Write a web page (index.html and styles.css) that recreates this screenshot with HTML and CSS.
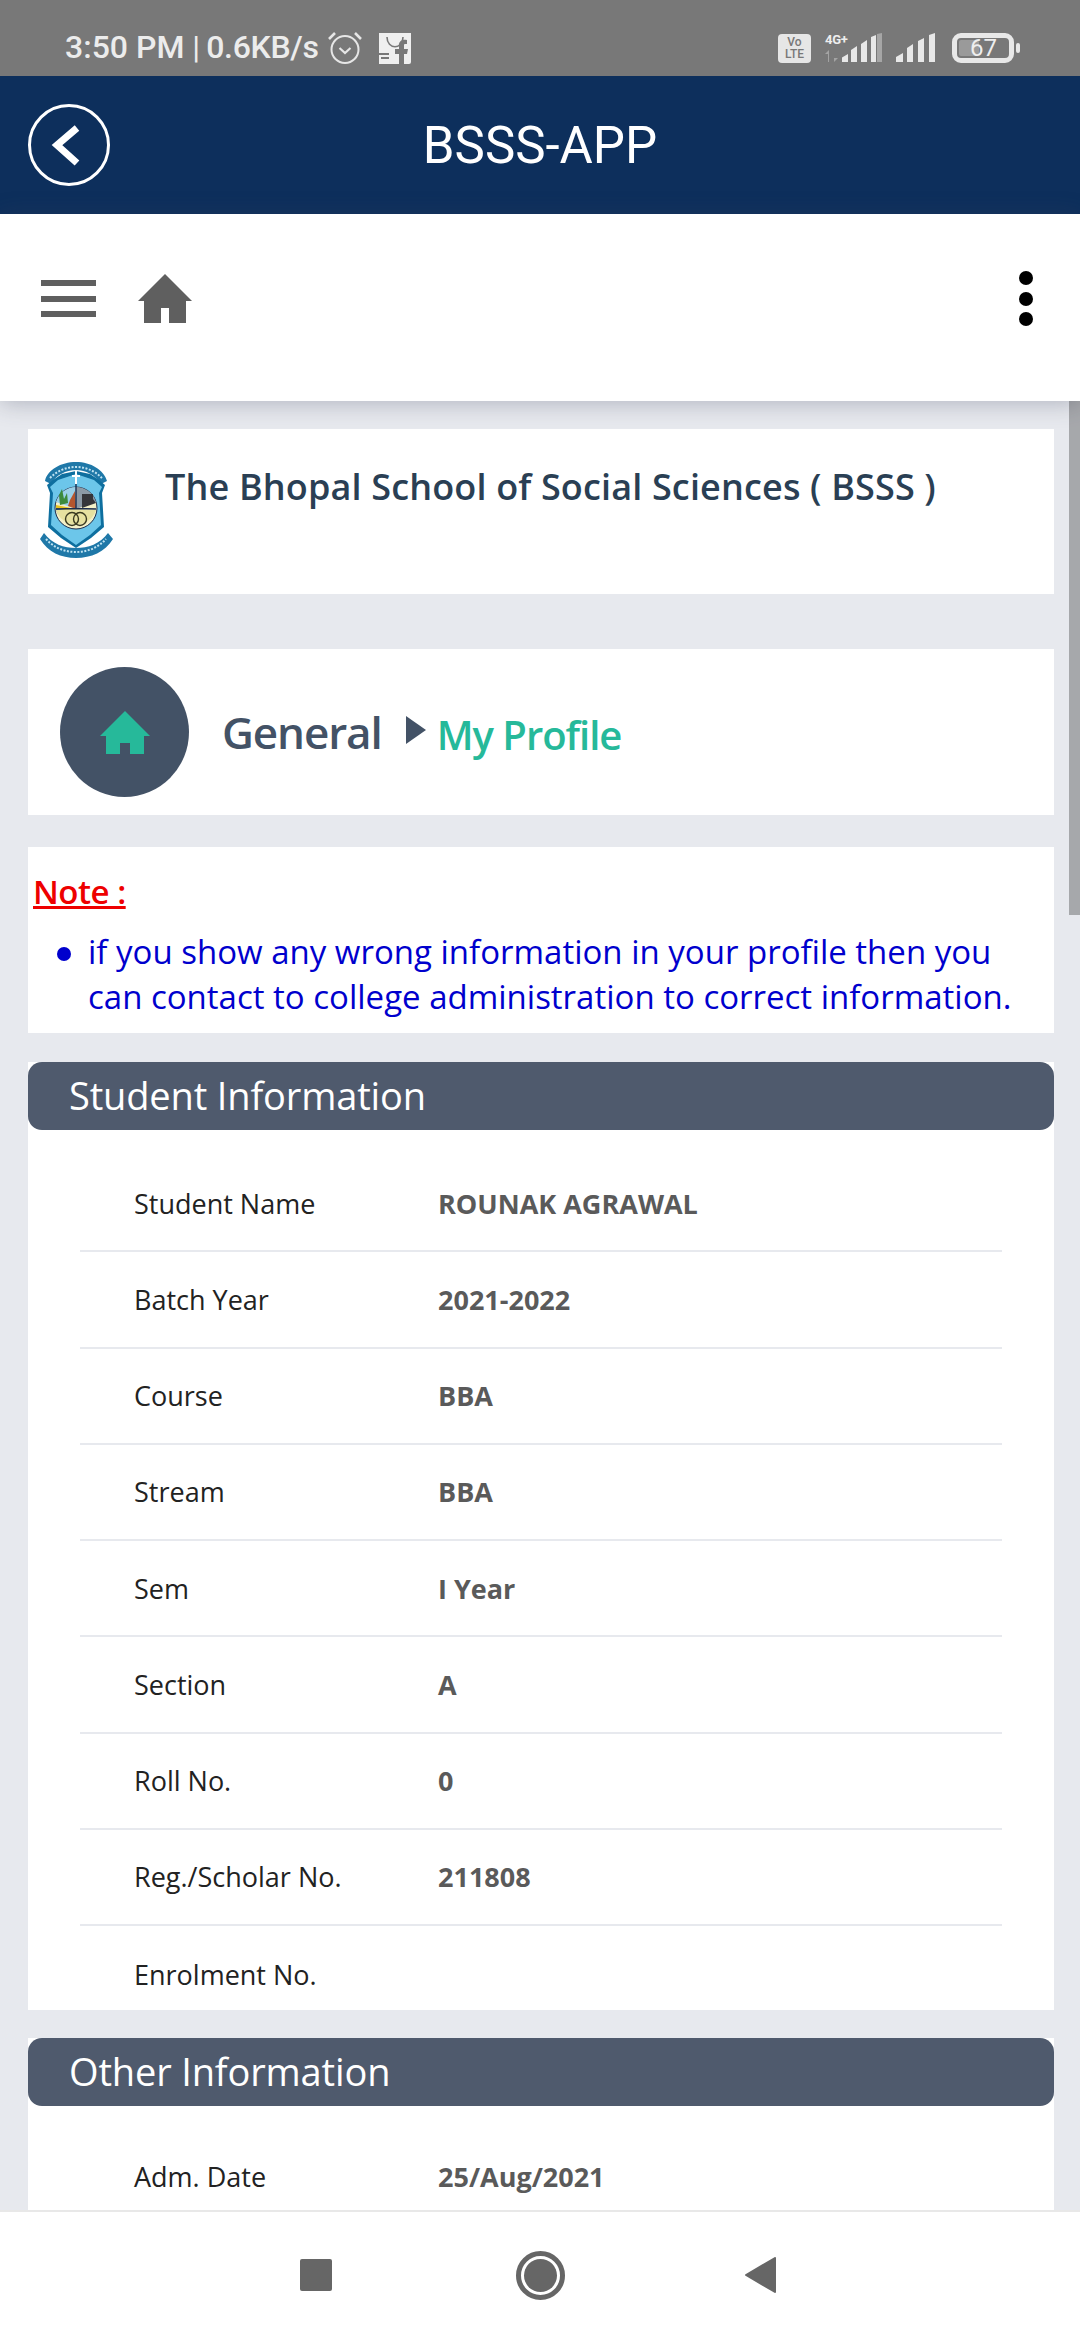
FILE: index.html
```html
<!DOCTYPE html>
<html lang="en">
<head>
<meta charset="utf-8">
<title>BSSS-APP</title>
<link rel="stylesheet" href="styles.css">
</head>
<body>
<div class="phone">
  <header class="status">
    <div class="status-left">
      <span class="clock">3:50 PM</span><span class="sep">|</span><span class="speed">0.6KB/s</span>
      <svg class="ic-alarm" viewBox="0 0 36 34" fill="none" stroke="#e6e6e6"><circle cx="18" cy="18.500" r="13.500" stroke-width="2"/><path d="M12.500 17l5.500 5 5.500-5" stroke-width="2.200"/><path d="M2 8l6-6M34 8l-6-6" stroke-width="2.600"/></svg>
      <svg class="ic-bag" viewBox="0 0 34 34"><path fill="#efefef" d="M1 3a2 2 0 0 1 2-2h28a2 2 0 0 1 2 2v29a2 2 0 0 1-2 2H1z"/><path d="M9 7c0 13 16 13 16 0" fill="none" stroke="#787878" stroke-width="1.600"/><path fill="#787878" d="M1 1h32v2H1zM21 34V24h-4v-5h4v-4c0-4 3-6 8-5v4c-3 0-3 0-3 2v3h4l-1 5h-3v10zM1 23h10v2H1zM3 27h8v2H3z"/></svg>
    </div>
    <div class="status-right">
      <div class="volte"><span>Vo</span><span>LTE</span></div>
      <div class="net">
        <span class="net-label">4G+</span>
        <svg class="ic-arrows" viewBox="0 0 13 12"><path fill="#a3a3a3" d="M3 12V4H0l4-4v12zM9 0v8h4l-4 4z"/></svg>
      </div>
      <svg class="ic-sig1" viewBox="0 0 40 29"><path fill="#e8e8e8" d="M0 29v-4l7-4v8zM10 29V17l6-4v16zM20 29V11l6-4v22zM30 29V4l5-2v27z" transform="translate(-1 0)"/><path fill="#a6a6a6" d="M35 29V1l5-1v29z"/></svg>
      <svg class="ic-sig2" viewBox="0 0 40 29"><path fill="#e8e8e8" d="M0 29v-5l7-4v9zM11 29V15l6-4v18zM22 29V8l6-3v24zM33 29V2l6-2v29z"/></svg>
      <div class="battery"><span class="battery-fill"></span><span class="battery-num">67</span></div>
      <span class="battery-nub"></span>
    </div>
  </header>

  <div class="appbar">
    <svg class="ic-back" viewBox="0 0 84 84" fill="none" stroke="#fff"><circle cx="42" cy="42" r="39.500" stroke-width="3"/><path d="M50 25L30 42l20 18" stroke-width="7"/></svg>
    <h1 class="app-title">BSSS-APP</h1>
  </div>

  <nav class="toolbar">
    <div class="burger"><span></span><span></span><span></span></div>
    <svg class="ic-home" viewBox="0 0 54 49"><path fill="#5f5f5f" d="M27 0l27 27h-6v22H31V34h-8v15H6V27H0z"/></svg>
    <div class="dots"><span></span><span></span><span></span></div>
  </nav>

  <main class="content">
    <section class="brand card">
      <svg class="logo" viewBox="0 0 74 97">
        <path fill="#1f78a8" d="M6 20C8 9 22 1 37 1s28 8 31 19l-6 3C56 14 47 9 37 9S17 14 12 23z"/>
        <path fill="#0e6f9f" d="M8 24l6-5 9-6 14-3 14 3 9 6 6 5-3 8 2 34-13 11-15 10-15-10-13-11 2-34z"/>
        <path fill="#6cc6ea" d="M11 26l8-7 18-6 18 6 8 7-3 6 2 32-11 10-14 10-14-10-11-10 2-32z"/>
        <circle cx="37" cy="47" r="21" fill="#f4f0c8" stroke="#1c2d4d" stroke-width="1"/>
        <path fill="#9ad0e8" d="M37 26a21 21 0 0 0-20 15l20 7z"/>
        <path fill="#8c9aa6" d="M37 26a21 21 0 0 1 20 15l-20 7z"/>
        <path fill="#3c8a3c" d="M20 34l3-6 2 10 3-6 1 10-8 2z"/>
        <path fill="#e6c21f" d="M17 44l20 4-5 4-15-3z"/>
        <path fill="#2d7fc4" d="M17 47l13 3-4 6-8-4z"/>
        <path fill="#b5562e" d="M31 39l5-9 1 18-8-3z"/>
        <path fill="#35363a" d="M43 33h11v5l3 4-14 5z"/>
        <path fill="#e6e1a0" d="M17 49l20-1 20 1a21 21 0 0 1-40 0z"/>
        <path d="M37 13v35M17 48l20-0.500 20 0.500" stroke="#1c2d4d" stroke-width="1.400" fill="none"/>
        <circle cx="33" cy="58" r="6.500" fill="none" stroke="#3a3a20" stroke-width="1.400"/>
        <circle cx="41" cy="58" r="6.500" fill="none" stroke="#3a3a20" stroke-width="1.400"/>
        <path d="M37 10v13M33 15h8" stroke="#fff" stroke-width="2"/>
        <path fill="#1f78a8" d="M1 78l4-6c8 11 20 15 32 15s24-4 32-15l5 6c-8 13-22 19-37 19S9 91 1 78z"/>
        <path d="M7 78c8 9 19 13 30 13s22-4 30-13" fill="none" stroke="#bfe3f2" stroke-width="2" stroke-dasharray="2 1.500"/>
        <path d="M11 17c7-7 16-11 26-11s19 4 26 11" fill="none" stroke="#bfe3f2" stroke-width="2" stroke-dasharray="2 1.500"/>
      </svg>
      <h2 class="brand-name">The Bhopal School of Social Sciences ( BSSS )</h2>
    </section>

    <section class="crumbs card">
      <span class="crumb-disc">
        <svg class="ic-crumb" viewBox="0 0 50 43"><path fill="#26b99a" d="M25 0l25 25h-6v18H30V32h-10v11H6V25H0z"/></svg>
      </span>
      <span class="crumb-parent">General</span>
      <span class="crumb-arrow"></span>
      <span class="crumb-current">My Profile</span>
    </section>

    <section class="note card">
      <p class="note-title">Note :</p>
      <ul class="note-list">
        <li>if you show any wrong information in your profile then you can contact to college administration to correct information.</li>
      </ul>
    </section>

    <section class="panel student">
      <h3 class="panel-head">Student Information</h3>
      <dl class="rows">
        <div class="row"><dt>Student Name</dt><dd>ROUNAK AGRAWAL</dd></div>
        <div class="row"><dt>Batch Year</dt><dd>2021-2022</dd></div>
        <div class="row"><dt>Course</dt><dd>BBA</dd></div>
        <div class="row"><dt>Stream</dt><dd>BBA</dd></div>
        <div class="row"><dt>Sem</dt><dd>I Year</dd></div>
        <div class="row"><dt>Section</dt><dd>A</dd></div>
        <div class="row"><dt>Roll No.</dt><dd>0</dd></div>
        <div class="row"><dt>Reg./Scholar No.</dt><dd>211808</dd></div>
        <div class="row row-last"><dt>Enrolment No.</dt><dd></dd></div>
      </dl>
    </section>

    <section class="panel other">
      <h3 class="panel-head">Other Information</h3>
      <dl class="rows">
        <div class="row"><dt>Adm. Date</dt><dd>25/Aug/2021</dd></div>
      </dl>
    </section>
    <div class="scrollbar"></div>
  </main>

  <footer class="navbar">
    <span class="nav-square"></span>
    <span class="nav-circle"><span></span></span>
    <svg class="nav-back" viewBox="0 0 31 36"><path fill="#666" stroke="#666" stroke-width="2" stroke-linejoin="round" d="M30 1v34L1 18z"/></svg>
  </footer>
</div>
</body>
</html>
```
FILE: styles.css
```css
* { box-sizing: border-box; margin: 0; padding: 0; }
html, body { width: 1080px; height: 2340px; overflow: hidden; }
body { font-family: "Open Sans", sans-serif; background: #e7e9ee; }
.phone { width: 1080px; height: 2340px; display: flex; flex-direction: column; }

/* status bar */
.status { height: 76px; flex: none; background: #787878; display: flex; justify-content: space-between; padding: 29px 60px 0 65px; font-family: Roboto, sans-serif; color: #ececec; }
.status-left { display: flex; align-items: flex-start; font-weight: 500; font-size: 32px; line-height: 37px; }
.sep { font-weight: 400; margin: 0 6px 0 8px; }
.speed { letter-spacing: -0.3px; }
.ic-alarm { width: 36px; height: 34px; margin: 2px 0 0 8px; }
.ic-bag { width: 34px; height: 34px; margin: 1px 0 0 15px; }
.status-right { display: flex; align-items: flex-start; padding-top: 4px; }
.volte { width: 33px; height: 29px; margin-top: 1px; background: #e6e6e6; border-radius: 4px; color: #787878; font-size: 12px; line-height: 12px; font-weight: 500; display: flex; flex-direction: column; align-items: center; padding-top: 2px; }
.net { width: 29px; margin-left: 14px; display: flex; flex-direction: column; }
.net-label { font-size: 13px; line-height: 13px; font-weight: 700; color: #eee; letter-spacing: -0.3px; }
.ic-arrows { width: 13px; height: 12px; margin-top: 4px; }
.ic-sig1 { width: 40px; height: 29px; margin-left: -12px; }
.ic-sig2 { width: 40px; height: 29px; margin-left: 14px; }
.battery { position: relative; width: 62px; height: 30px; margin-left: 16px; border: 5px solid #e8e8e8; border-radius: 9px; }
.battery-fill { position: absolute; left: 2px; top: 2px; width: 20px; height: 16px; background: #9a9a9a; border-radius: 2px; }
.battery-num { position: absolute; left: 13px; top: -3px; font-size: 24px; line-height: 26px; font-weight: 400; color: #eee; }
.battery-nub { width: 4px; height: 10px; margin: 10px 0 0 2px; background: #e8e8e8; border-radius: 2px; }

/* app bar */
.appbar { position: relative; height: 138px; flex: none; background: #0d2f5c; display: flex; align-items: center; justify-content: center; }
.ic-back { position: absolute; left: 27px; top: 27px; width: 84px; height: 84px; }
.app-title { font-family: Roboto, sans-serif; font-weight: 400; font-size: 51px; color: #fff; }

/* toolbar */
.toolbar { position: relative; z-index: 2; height: 187px; flex: none; background: #fff; box-shadow: 0 2px 22px rgba(60, 64, 90, 0.32); display: flex; align-items: flex-start; padding: 60px 47px 0 41px; }
.burger { width: 55px; display: flex; flex-direction: column; gap: 9.500px; margin-top: 6px; }
.burger span { display: block; height: 6px; background: #5f5f5f; }
.ic-home { width: 54px; height: 49px; margin-left: 42px; }
.dots { margin-left: auto; display: flex; flex-direction: column; gap: 6.500px; margin-top: -3px; }
.dots span { width: 14px; height: 14px; background: #000; border-radius: 50%; }

/* content */
.content { position: relative; flex: 1; min-height: 0; overflow: hidden; padding: 28px 26px 0 28px; }
.card { background: #fff; }
.brand { height: 165px; display: flex; align-items: flex-start; padding: 32px 0 0 11px; }
.logo { width: 74px; height: 97px; flex: none; }
.brand-name { font-size: 36px; font-weight: 600; color: #2a3f54; margin: 1px 0 0 52px; line-height: 50px; white-space: nowrap; letter-spacing: 0.15px; }
.crumbs { height: 166px; margin-top: 55px; display: flex; align-items: center; padding-left: 32px; }
.crumb-disc { width: 129px; height: 130px; border-radius: 50%; background: #435266; display: flex; align-items: center; justify-content: center; flex: none; }
.ic-crumb { width: 50px; height: 43px; }
.crumb-parent { font-size: 44px; font-weight: 600; color: #435266; margin-left: 33px; letter-spacing: -1.100px; }
.crumb-arrow { width: 0; height: 0; margin: -4px 0 0 24px; border-left: 20px solid #435266; border-top: 14px solid transparent; border-bottom: 14px solid transparent; }
.crumb-current { font-size: 40px; font-weight: 600; color: #26b99a; margin: 4px 0 0 11px; letter-spacing: -1px; }
.note { height: 186px; margin-top: 32px; padding: 22px 0 0 5px; }
.note-title { font-size: 33px; line-height: 45px; font-weight: 600; color: #ee0000; text-decoration: underline; letter-spacing: -0.5px; }
.note-list { list-style: none; margin-top: 15px; padding: 0 20px 0 55px; }
.note-list li { position: relative; font-size: 33px; line-height: 45px; color: #0000cd; }
.note-list li::before { content: ""; position: absolute; left: -31px; top: 18px; width: 14px; height: 14px; border-radius: 50%; background: #0000cd; }

/* panels */
.panel { background: #fff; }
.student { height: 948px; margin-top: 29px; }
.other { margin-top: 28px; height: 200px; }
.panel-head { height: 68px; background: #4f5a6d; border-radius: 14px; color: #fff; font-weight: 400; font-size: 38px; line-height: 66px; padding-left: 41px; letter-spacing: -0.15px; }
.rows { margin: 26px 52px 0; }
.other .rows { margin-top: 23px; }
.row { height: 96.250px; border-bottom: 2px solid #e7e9ee; display: flex; align-items: center; padding-left: 54px; font-size: 27px; }
.row-last { border-bottom: 0; }
.row dt { width: 304px; flex: none; color: #222; }
.row dd { font-weight: 700; color: #5a5a5a; }
.scrollbar { position: absolute; right: 0; top: -187px; width: 11px; height: 701px; background: rgba(0, 0, 0, 0.28); z-index: 3; }

/* nav */
.navbar { position: relative; height: 130px; flex: none; background: #fff; border-top: 2px solid #e8e8e8; display: flex; align-items: flex-start; padding: 47px 0 0 300px; }
.nav-square { width: 32px; height: 32px; background: #666; border-radius: 2px; }
.nav-circle { width: 49px; height: 49px; margin: -8px 0 0 184px; border: 5px solid #666; border-radius: 50%; display: flex; align-items: center; justify-content: center; }
.nav-circle span { width: 33px; height: 33px; background: #666; border-radius: 50%; }
.nav-back { width: 31px; height: 36px; margin: -2px 0 0 180px; }
```
